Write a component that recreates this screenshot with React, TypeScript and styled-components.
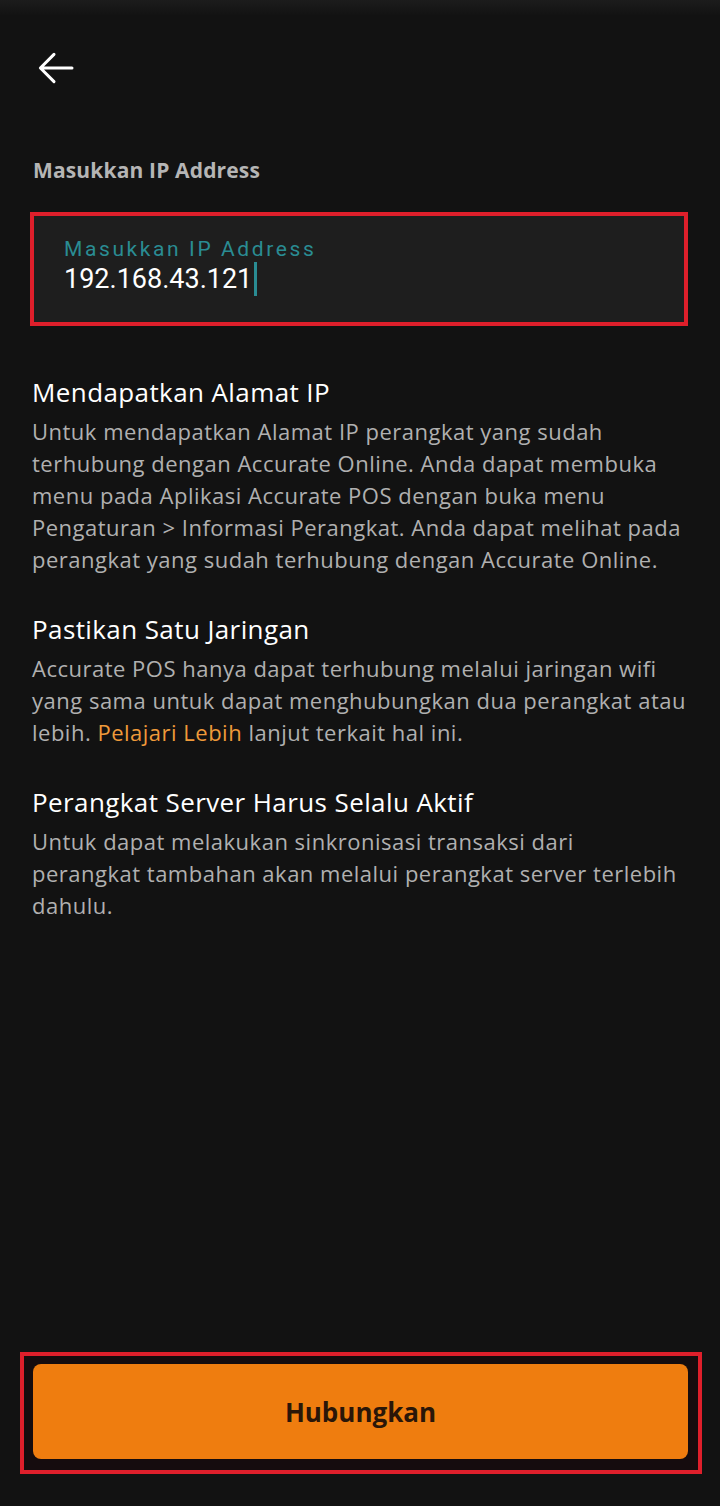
import type { ReactNode } from "react";
import styled, { createGlobalStyle } from "styled-components";

const GlobalStyle = createGlobalStyle`
  html,
  body {
    margin: 0;
    padding: 0;
    background: #121212;
  }
  body {
    font-family: "Open Sans", "Noto Sans", sans-serif;
  }
  #root {
    min-height: 1506px;
  }
`;

type Tip = {
  title: string;
  body: () => ReactNode;
};

const tips: Tip[] = [
  {
    title: "Mendapatkan Alamat IP",
    body: () => (
      <>
        Untuk mendapatkan Alamat IP perangkat yang sudah terhubung dengan
        Accurate Online. Anda dapat membuka menu pada Aplikasi Accurate POS
        dengan buka menu Pengaturan &gt; Informasi Perangkat. Anda dapat
        melihat pada perangkat yang sudah terhubung dengan Accurate Online.
      </>
    ),
  },
  {
    title: "Pastikan Satu Jaringan",
    body: () => (
      <>
        Accurate POS hanya dapat terhubung melalui jaringan wifi yang sama
        untuk dapat menghubungkan dua perangkat atau lebih.{" "}
        <LinkText>Pelajari Lebih</LinkText> lanjut terkait hal ini.
      </>
    ),
  },
  {
    title: "Perangkat Server Harus Selalu Aktif",
    body: () => (
      <>
        Untuk dapat melakukan sinkronisasi transaksi dari perangkat tambahan
        akan melalui perangkat server terlebih dahulu.
      </>
    ),
  },
];

const BackArrow = () => (
  <svg width="48" height="48" viewBox="0 0 24 24" fill="none">
    <path
      d="M20 12H4.6M11 5.2L4.2 12l6.8 6.8"
      stroke="#ffffff"
      strokeWidth="1.5"
      strokeLinecap="round"
      strokeLinejoin="round"
    />
  </svg>
);

const IpField = () => (
  <Highlight>
    <FieldBox>
      <FloatLabel>Masukkan IP Address</FloatLabel>
      <FieldValue>
        192.168.43.121
        <Caret />
      </FieldValue>
    </FieldBox>
  </Highlight>
);

const TipList = () => (
  <Tips>
    {tips.map((tip) => (
      <TipItem key={tip.title}>
        <TipTitle>{tip.title}</TipTitle>
        <TipBody>{tip.body()}</TipBody>
      </TipItem>
    ))}
  </Tips>
);

const App = () => {
  return (
    <>
      <GlobalStyle />
      <Screen>
        <StatusShade />
        <Topbar>
          <BackButton aria-label="Kembali">
            <BackArrow />
          </BackButton>
        </Topbar>

        <Content>
          <SectionLabel>Masukkan IP Address</SectionLabel>
          <IpField />
          <TipList />
        </Content>

        <Footer>
          <ButtonFrame>
            <PrimaryButton>Hubungkan</PrimaryButton>
          </ButtonFrame>
        </Footer>
      </Screen>
    </>
  );
};

export default App;

const Screen = styled.div`
  display: flex;
  flex-direction: column;
  width: 720px;
  height: 1506px;
  background: #121212;
  color: #ffffff;
`;
const StatusShade = styled.div`
  height: 16px;
  background: linear-gradient(#1c1c1c, #121212);
`;
const Topbar = styled.div`
  display: flex;
  align-items: center;
  height: 104px;
  padding-left: 32px;
`;
const BackButton = styled.button`
  display: flex;
  align-items: center;
  justify-content: center;
  padding: 0;
  border: none;
  background: none;
  cursor: pointer;
`;
const Content = styled.div`
  flex: 1;
  padding: 0 34px 0 32px;
`;
const SectionLabel = styled.div`
  padding-top: 36px;
  margin-left: 1px;
  font-size: 21px;
  font-weight: 700;
  line-height: 28px;
  letter-spacing: 0.15px;
  color: #b5b5b5;
`;
const Highlight = styled.div`
  margin: 28px 0 0 -2px;
  width: 658px;
  box-sizing: border-box;
  border: 4px solid #de1f2b;
`;
const FieldBox = styled.div`
  height: 106px;
  box-sizing: border-box;
  padding: 20px 30px 0;
  background: #1e1e1e;
  font-family: "Roboto", "Noto Sans", sans-serif;
`;
const FloatLabel = styled.div`
  font-size: 21px;
  line-height: 26px;
  color: #2a8c93;
  letter-spacing: 2.6px;
`;
const FieldValue = styled.div`
  display: flex;
  align-items: center;
  font-size: 27px;
  line-height: 34px;
  color: #ffffff;
`;
const Caret = styled.span`
  display: inline-block;
  width: 3px;
  height: 34px;
  margin-left: 2px;
  background: #2a8c93;
`;
const Tips = styled.div`
  display: flex;
  flex-direction: column;
  gap: 38px;
  margin-top: 50px;
`;
const TipItem = styled.div`
  display: flex;
  flex-direction: column;
  gap: 7px;
`;
const TipTitle = styled.div`
  font-size: 26px;
  line-height: 32px;
  letter-spacing: 0.4px;
  color: #ffffff;
`;
const TipBody = styled.div`
  font-size: 22px;
  line-height: 32px;
  letter-spacing: 0.5px;
  color: #b0b0b0;
`;
const LinkText = styled.span`
  color: #ef9a3a;
`;
const Footer = styled.div`
  padding: 0 18px 32px 20px;
`;
const ButtonFrame = styled.div`
  box-sizing: border-box;
  height: 122px;
  padding: 8px 10px 11px 9px;
  border: 4px solid #de1f2b;
  background: #150c0e;
`;
const PrimaryButton = styled.button`
  width: 100%;
  height: 100%;
  border: none;
  border-radius: 8px;
  background: #ef7d0f;
  color: #2a1608;
  font-family: "Open Sans", "Noto Sans", sans-serif;
  font-size: 26px;
  font-weight: 700;
  cursor: pointer;
`;
